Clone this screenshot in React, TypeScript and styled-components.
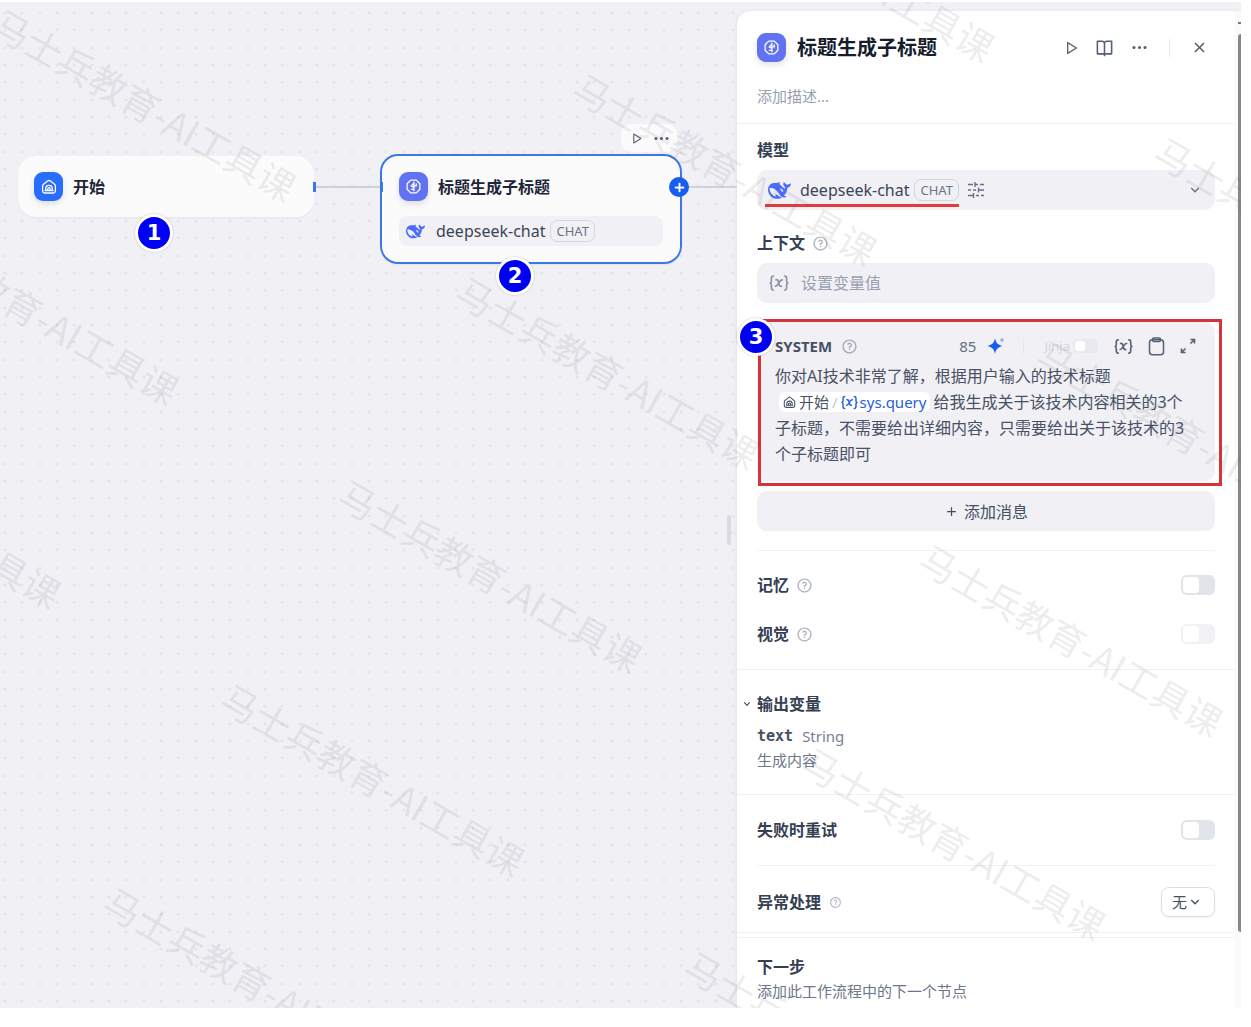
import React from "react";
import styled, { createGlobalStyle } from "styled-components";
import {
  RiAddLine,
  RiArrowDownSLine,
  RiBookOpenLine,
  RiCloseLine,
  RiMoreFill,
  RiPlayLargeLine,
  RiQuestionLine,
} from "react-icons/ri";

const GlobalStyle = createGlobalStyle`
  * { box-sizing: border-box; }
  body {
    margin: 0;
    background: #ffffff;
    color: #354052;
    font-family: "Noto Sans", "Noto Sans CJK SC", sans-serif;
    font-size: 16px;
  }
  button, input, select { font: inherit; color: inherit; }
  button { border: 0; padding: 0; background: none; cursor: pointer; }
  svg { display: block; flex: none; }
`;

/* ---------- page ---------- */

const Page = styled.div`
  display: flex;
  min-height: 100vh;
  padding: 2px 10px 19px 0;
`;

const Frame = styled.main`
  position: relative;
  display: flex;
  flex: 1;
  min-width: 0;
  overflow: hidden;
  background: #f0f0f5;
`;

const Canvas = styled.section`
  position: relative;
  flex: 1;
  min-width: 0;
`;

const CanvasDrawing = styled.svg`
  position: absolute;
  inset: 0;
  width: 100%;
  height: 100%;
`;

const ResizeHandle = styled.div`
  position: absolute;
  top: 513px;
  right: 6px;
  width: 4px;
  height: 30px;
  border-radius: 2px;
  background: #d8dbe2;
`;

/* ---------- nodes ---------- */

const Node = styled.article<{ $x: number; $y: number; $w: number; $selected?: boolean }>`
  position: absolute;
  left: ${(p) => p.$x}px;
  top: ${(p) => p.$y}px;
  width: ${(p) => p.$w}px;
  padding: ${(p) => (p.$selected ? "16px 17px 16px" : "14px")};
  border: 2px solid ${(p) => (p.$selected ? "#3b78e7" : "#fbfbfb")};
  border-radius: 18px;
  background: #fbfbfb;
  box-shadow: 0 1px 2px rgba(16, 24, 40, 0.05);
`;

const NodeHead = styled.div`
  display: flex;
  align-items: center;
  gap: 10px;
`;

const NodeTitle = styled.h3`
  margin: 0;
  font-size: 16px;
  line-height: 24px;
  font-weight: 700;
  color: #1f2638;
`;

const NodeModel = styled.div`
  display: flex;
  align-items: center;
  gap: 11px;
  height: 30px;
  margin-top: 15px;
  padding: 0 7px;
  border-radius: 8px;
  background: #f1f1f5;
`;

const IconTile = styled.span<{ $color: string }>`
  display: grid;
  place-items: center;
  flex: none;
  width: 29px;
  height: 29px;
  border-radius: 9px;
  background: ${(p) => p.$color};
  color: #ffffff;
  box-shadow: 0 3px 6px rgba(16, 24, 40, 0.12);
`;

const NodeToolbar = styled.div`
  position: absolute;
  right: 3px;
  bottom: 100%;
  display: flex;
  align-items: center;
  gap: 9px;
  height: 28px;
  margin-bottom: 4px;
  padding: 0 6px 0 9px;
  border-radius: 10px;
  background: #fbfbfb;
  color: #566074;
`;

const AddHandle = styled.button`
  position: absolute;
  top: 21px;
  right: -9px;
  display: grid;
  place-items: center;
  width: 20px;
  height: 20px;
  border-radius: 50%;
  background: #155eef;
  color: #ffffff;
`;

const Port = styled.span<{ $x: number }>`
  position: absolute;
  left: ${(p) => p.$x}px;
  top: 180px;
  width: 3px;
  height: 10px;
  background: #3b78e7;
`;

const Marker = styled.span<{ $x: number; $y: number }>`
  position: absolute;
  z-index: 2;
  left: ${(p) => p.$x}px;
  top: ${(p) => p.$y}px;
  display: grid;
  place-items: center;
  width: 38px;
  height: 38px;
  border: 3px solid #ffffff;
  border-radius: 50%;
  background: #0000f5;
  box-shadow: 0 0 2px rgba(0, 0, 0, 0.25);
  color: #ffffff;
  font: 700 21px/30px "DejaVu Sans", sans-serif;
`;

const ModelName = styled.span`
  display: flex;
  align-items: center;
  gap: 5px;
  font-size: 16px;
  line-height: 24px;
  color: #3c4558;
`;

const Tag = styled.span`
  height: 22px;
  padding: 0 5px;
  border: 1px solid #d3d6de;
  border-radius: 7px;
  font-size: 13px;
  line-height: 20px;
  color: #6b7486;
`;

/* ---------- side panel ---------- */

const Panel = styled.aside`
  display: flex;
  flex: none;
  width: 504px;
  margin-top: 9px;
  border-radius: 14px 0 0 0;
  background: #ffffff;
  box-shadow: -1px 0 3px rgba(16, 24, 40, 0.06);
`;

const PanelBody = styled.div`
  flex: 1;
  min-width: 0;
`;

const ScrollTrack = styled.div`
  display: flex;
  flex-direction: column;
  align-items: flex-end;
  width: 6px;
  padding: 11px 0 76px;
  background: #fafafa;
`;

const ScrollArrow = styled.span`
  width: 3px;
  height: 2px;
  margin-bottom: 10px;
  background: #777777;
`;

const ScrollThumb = styled.span`
  flex: 1;
  width: 3px;
  border-radius: 3px 0 0 3px;
  background: #878787;
`;

const PanelHeader = styled.header`
  padding: 22px 20px 15px;
  border-bottom: 1px solid #eff0f3;
`;

const Row = styled.div`
  display: flex;
  align-items: center;
  gap: 8px;
`;

const PanelTitle = styled.h2`
  flex: 1;
  margin: 0 0 0 3px;
  font-size: 20px;
  line-height: 28px;
  font-weight: 700;
  color: #161d2d;
`;

const HeaderActions = styled.div`
  display: flex;
  align-items: center;
  gap: 16px;
  padding-right: 6px;
  color: #566074;
`;

const HeaderRule = styled.span`
  width: 1px;
  height: 18px;
  margin: 0 4px;
  background: #e6e8ed;
`;

const Description = styled.input`
  display: block;
  width: 100%;
  height: 24px;
  margin-top: 22px;
  padding: 0;
  border: 0;
  outline: 0;
  background: none;
  font-size: 15px;
  &::placeholder { color: #98a0b0; opacity: 1; }
`;

const Section = styled.section<{ $top: number; $bottom: number }>`
  padding: ${(p) => p.$top}px 20px ${(p) => p.$bottom}px;
`;

const Rule = styled.hr<{ $inset?: boolean }>`
  height: 1px;
  margin: 0 ${(p) => (p.$inset ? 20 : 0)}px;
  border: 0;
  background: #f0f1f4;
`;

const NextSection = styled(Section)`
  margin-top: 4px;
  border-top: 1px solid #f0f1f4;
`;

const LabelRow = styled.div<{ $gap?: number }>`
  display: flex;
  align-items: center;
  gap: 7px;
  height: 24px;
  margin-bottom: ${(p) => p.$gap || 0}px;
  color: #b0b6c2;
`;

const Label = styled.label`
  font-size: 16px;
  line-height: 24px;
  font-weight: 700;
  color: #354052;
`;

const Spacer = styled.span`
  flex: 1;
`;

const Field = styled.div`
  display: flex;
  align-items: center;
  height: 40px;
  border-radius: 10px;
  background: #f0f0f5;
  color: #667085;
`;

const ModelField = styled(Field)`
  margin-bottom: 21px;
  padding: 0 12px 0 8px;
  gap: 8px;
`;

const ModelPicker = styled.button`
  position: relative;
  display: flex;
  align-items: center;
  gap: 9px;
  height: 40px;
  padding-left: 3px;
  &::after {
    content: "";
    position: absolute;
    left: 0;
    right: 0;
    bottom: 3px;
    height: 3px;
    background: #e23b42;
  }
`;

const VariableField = styled(Field)`
  margin-bottom: 19px;
  padding: 0 12px;
  gap: 12px;
  color: #8b94a6;
`;

const VariableInput = styled.input`
  flex: 1;
  min-width: 0;
  padding: 0;
  border: 0;
  outline: 0;
  background: none;
  &::placeholder { color: #98a0b0; opacity: 1; }
`;

const Prompt = styled.div`
  position: relative;
  margin-bottom: 10px;
  padding: 12px 19px 14px 18px;
  border-radius: 10px;
  background: #f0f0f5;
`;

const Highlight = styled.div`
  position: absolute;
  inset: -3px -7px -5px 1px;
  border: 3px solid #d2363b;
  pointer-events: none;
`;

const PromptHead = styled.div`
  display: flex;
  align-items: center;
  height: 24px;
  margin-bottom: 5px;
  color: #566074;
`;

const Role = styled.span`
  margin-right: 9px;
  font-size: 15px;
  font-weight: 700;
  color: #465063;
`;

const Count = styled.span`
  margin-right: 11px;
  font-size: 15px;
  color: #667085;
`;

const PromptRule = styled.span`
  width: 1px;
  height: 16px;
  margin: 0 20px 0 18px;
  background: #e6e7ed;
`;

const Jinja = styled.label`
  margin-right: 3px;
  font-size: 13px;
  color: #d5d7de;
`;

const Tools = styled.div`
  display: flex;
  align-items: center;
  gap: 15px;
  margin-left: 16px;
`;

const PromptText = styled.p`
  margin: 0;
  font-size: 16px;
  line-height: 26px;
  color: #495163;
`;

const Chip = styled.span`
  display: inline-flex;
  align-items: center;
  height: 20px;
  margin: 3px 3px 3px 4px;
  padding: 0 4px;
  gap: 3px;
  border-radius: 6px;
  background: #ffffff;
  vertical-align: top;
  font-size: 15px;
  line-height: 20px;
`;

const ChipSlash = styled.span`
  color: #c5cad4;
`;

const ChipVariable = styled.span`
  display: inline-flex;
  align-items: center;
  gap: 2px;
  color: #2460dc;
`;

const AddMessage = styled.button`
  display: flex;
  align-items: center;
  justify-content: center;
  gap: 5px;
  width: 100%;
  height: 40px;
  border-radius: 10px;
  background: #f0f0f5;
  color: #465063;
`;

const Switch = styled.input<{ $small?: boolean }>`
  appearance: none;
  flex: none;
  display: flex;
  width: ${(p) => (p.$small ? 25 : 34)}px;
  height: ${(p) => (p.$small ? 14 : 20)}px;
  margin: 0;
  padding: 2px;
  border-radius: ${(p) => (p.$small ? 4 : 6)}px;
  background: #e2e4eb;
  &:disabled { background: ${(p) => (p.$small ? "#e9eaef" : "#f1f1f6")}; }
  &::before {
    content: "";
    width: ${(p) => (p.$small ? 10 : 16)}px;
    border-radius: ${(p) => (p.$small ? 3 : 4)}px;
    background: #ffffff;
  }
`;

const OutputLabel = styled.button`
  display: flex;
  align-items: center;
  gap: 4px;
  height: 24px;
  margin: 0 0 8px -16px;
  font-weight: 700;
  line-height: 24px;
  color: #354052;
`;

const OutputName = styled.code`
  margin-right: 1px;
  font: 700 15px/24px "DejaVu Sans Mono", monospace;
  color: #465063;
`;

const OutputType = styled.span`
  font-size: 15px;
  line-height: 24px;
  color: #778093;
`;

const Hint = styled.p`
  margin: 0;
  font-size: 15px;
  line-height: 24px;
  color: #6e778a;
`;

const SelectBox = styled.span`
  display: grid;
  grid-template-columns: 1fr;
  align-items: center;
  width: 54px;
  height: 30px;
  border: 1px solid #dcdfe5;
  border-radius: 8px;
  box-shadow: 0 1px 2px rgba(16, 24, 40, 0.06);
  color: #465063;
  > * { grid-area: 1 / 1; }
  > svg { justify-self: end; margin-right: 11px; pointer-events: none; }
`;

const Select = styled.select`
  appearance: none;
  width: 100%;
  height: 100%;
  padding: 0 0 0 10px;
  border: 0;
  outline: 0;
  background: none;
  font-size: 15px;
`;

/* ---------- watermark ---------- */

const WatermarkLayer = styled.div`
  position: absolute;
  z-index: 3;
  left: 241px;
  top: -406px;
  display: grid;
  grid-template-columns: repeat(3, 535px);
  grid-auto-rows: 235px;
  transform: rotate(30deg);
  transform-origin: 0 0;
  pointer-events: none;
  font: 400 37px/37px "Noto Sans CJK SC", sans-serif;
  color: rgba(70, 72, 80, 0.11);
  white-space: nowrap;
`;

const Watermark = styled.span<{ $col: number; $row: number }>`
  grid-column: ${(p) => p.$col};
  grid-row: ${(p) => p.$row};
`;

const WATERMARKS = [
  { col: 1, rows: [3, 4, 5] },
  { col: 2, rows: [1, 2, 3, 4, 5, 6] },
  { col: 3, rows: [1, 2, 3, 4, 5] },
];

/* ---------- icons ---------- */

const DeepSeekIcon = ({ size }: { size: number }) => (
  <svg width={size} height={size} viewBox="0 0 24 24" fill="#4d6bfe" fillRule="evenodd" aria-hidden="true">
    <path d="M23.748 4.482c-.254-.124-.364.113-.512.234-.051.039-.094.09-.137.136-.372.397-.806.657-1.373.626-.829-.046-1.537.214-2.163.848-.133-.782-.575-1.248-1.247-1.548-.352-.156-.708-.311-.955-.65-.172-.241-.219-.51-.305-.774-.055-.16-.11-.323-.293-.35-.2-.031-.278.136-.356.276-.313.572-.434 1.202-.422 1.84.027 1.436.633 2.58 1.838 3.393.137.093.172.187.129.323-.082.28-.18.552-.266.833-.055.179-.137.217-.329.14a5.526 5.526 0 01-1.736-1.18c-.857-.828-1.631-1.742-2.597-2.458a11.365 11.365 0 00-.689-.471c-.985-.957.13-1.743.388-1.836.27-.098.093-.432-.779-.428-.872.004-1.67.295-2.687.684a3.055 3.055 0 01-.465.137 9.597 9.597 0 00-2.883-.102c-1.885.21-3.39 1.102-4.497 2.623C.082 8.606-.231 10.684.152 12.85c.403 2.284 1.569 4.175 3.36 5.653 1.858 1.533 3.997 2.284 6.438 2.14 1.482-.085 3.133-.284 4.994-1.86.47.234.962.327 1.78.397.63.059 1.236-.03 1.705-.128.735-.156.684-.837.419-.961-2.155-1.004-1.682-.595-2.113-.926 1.096-1.296 2.746-2.642 3.392-7.003.05-.347.007-.565 0-.845-.004-.17.035-.237.23-.256a4.173 4.173 0 001.545-.475c1.396-.763 1.96-2.015 2.093-3.517.02-.23-.004-.467-.247-.588zM11.581 18c-2.089-1.642-3.102-2.183-3.52-2.16-.392.024-.321.471-.235.763.09.288.207.486.371.739.114.167.192.416-.113.603-.673.416-1.842-.14-1.897-.167-1.361-.802-2.5-1.86-3.301-3.307-.774-1.393-1.224-2.887-1.298-4.482-.02-.386.093-.522.477-.592a4.696 4.696 0 011.529-.039c2.132.312 3.946 1.265 5.468 2.774.868.86 1.525 1.887 2.202 2.891.72 1.066 1.494 2.082 2.48 2.914.348.292.625.514.891.677-.802.09-2.14.11-3.054-.614zm1-6.44a.306.306 0 01.415-.287.302.302 0 01.2.288.306.306 0 01-.31.307.303.303 0 01-.304-.308zm3.11 1.596c-.2.081-.399.151-.59.16a1.245 1.245 0 01-.798-.254c-.274-.23-.47-.358-.552-.758a1.73 1.73 0 01.016-.588c.07-.327-.008-.537-.239-.727-.187-.156-.426-.199-.688-.199a.559.559 0 01-.254-.078c-.11-.054-.2-.19-.114-.358.028-.054.16-.186.192-.21.356-.202.767-.136 1.146.016.352.144.618.408 1.001.782.391.451.462.576.685.914.176.265.336.537.445.848.067.195-.019.354-.25.452z" />
  </svg>
);

const HomeIcon = ({ size }: { size: number }) => (
  <svg width={size} height={size} viewBox="0 0 16 16" fill="none" stroke="currentColor" strokeWidth="1.3" strokeLinecap="round" strokeLinejoin="round" aria-hidden="true">
    <path d="M1.6 7.2c0-.8.3-1.4.9-1.9l4.1-3.4a2.2 2.2 0 0 1 2.8 0l4.1 3.4c.6.5.9 1.1.9 1.9v4.6a2.2 2.2 0 0 1-2.2 2.2H3.8a2.2 2.2 0 0 1-2.2-2.2z" />
    <path d="M4.7 11.4V9.6a3.3 3.3 0 0 1 6.6 0v1.8M6.8 11.4V9.8a1.2 1.2 0 0 1 2.4 0v1.6M4 11.5h8" />
  </svg>
);

const LlmIcon = () => (
  <svg width="17" height="17" viewBox="0 0 16 16" fill="none" stroke="currentColor" strokeWidth="1.2" strokeLinecap="round" strokeLinejoin="round" aria-hidden="true">
    <path d="M5.4 2h5.2L14 5.400v5.200L10.600 14H5.400L2 10.600V5.400z" />
    <path d="M8.400 4v8M8.400 5 5.800 7.400l2.600 1.400M8.400 7.400h2.200M10.600 5.600v1.800M6 10.600h2.400" />
  </svg>
);

const VariableIcon = ({ size }: { size: number }) => (
  <svg width={size} height={size} viewBox="0 0 20 20" fill="none" stroke="currentColor" strokeWidth="1.7" strokeLinecap="round" strokeLinejoin="round" aria-hidden="true">
    <path d="M4.400 3C2.800 3 2.400 4 2.400 5.400v2.400c0 1.200-.3 1.900-1.200 2.200.9.3 1.200 1 1.200 2.200v2.400c0 1.400.4 2.400 2 2.400M15.600 3c1.600 0 2 1 2 2.400v2.400c0 1.200.3 1.900 1.200 2.200-.9.3-1.200 1-1.200 2.200v2.400c0 1.400-.4 2.400-2 2.400" />
    <path d="M7 6.800c1.300-.3 1.900.2 2.200 1.400l1 3.600c.3 1.200.9 1.700 2.200 1.400M13.300 6.800c-1.700-.2-2.500 1.300-3.500 3.100s-1.700 3.500-3.300 3.300" />
  </svg>
);

const SlidersIcon = () => (
  <svg width="18" height="18" viewBox="0 0 18 18" fill="none" stroke="currentColor" strokeWidth="1.400" aria-hidden="true">
    <path d="M1 3.500h5M8 1v5M8 3.500h3M13 3.500h4M1 9h3M6 9h3M11.500 6.500v5M11.500 9H17M1 14.500h3M6.500 12v5M4 14.500h2.500M9 14.500h3M14 14.500h3" />
  </svg>
);

const SparkleIcon = () => (
  <svg width="18" height="18" viewBox="0 0 18 18" fill="#155eef" aria-hidden="true">
    <path d="M8 1c.9 4.900 2.200 6.500 7.600 8-5.400 1.500-6.700 3.100-7.600 8C7.100 12.100 5.800 10.500.4 9 5.800 7.500 7.100 5.900 8 1z" />
    <circle cx="15" cy="3" r="1.700" opacity=".45" />
  </svg>
);

const ClipboardIcon = () => (
  <svg width="17" height="19" viewBox="0 0 17 19" fill="none" stroke="currentColor" strokeWidth="1.500" strokeLinejoin="round" aria-hidden="true">
    <rect x="1.500" y="2.800" width="14" height="15" rx="3" />
    <rect x="4.500" y="1" width="8" height="3.600" rx="1.500" />
  </svg>
);

const ExpandIcon = () => (
  <svg width="16" height="16" viewBox="0 0 16 16" fill="none" stroke="currentColor" strokeWidth="1.600" aria-hidden="true">
    <path d="M10.500 1.500h4V5.500M14.500 1.500 10.500 5.500M1.500 10.500v4h4M1.500 14.500l4-4" />
  </svg>
);

const DOTS = [5, 22, 40];

/* ---------- view ---------- */

export default function App() {
  return (
    <Page>
      <GlobalStyle />
      <Frame>
        <Canvas>
          <CanvasDrawing aria-hidden="true">
            <defs>
              <pattern id="dots" width="52" height="52" patternUnits="userSpaceOnUse">
                {DOTS.map((x) =>
                  DOTS.map((y) => <circle key={`${x}-${y}`} cx={x} cy={y + 6} r="1.500" fill="#e1e4ea" />)
                )}
              </pattern>
            </defs>
            <rect width="100%" height="100%" fill="url(#dots)" />
            <path d="M314 185H382M680 185H760" stroke="#cdd2db" strokeWidth="2" />
          </CanvasDrawing>

          <Node $x={18} $y={154} $w={296}>
            <NodeHead>
              <IconTile $color="#296dff"><HomeIcon size={16} /></IconTile>
              <NodeTitle>开始</NodeTitle>
            </NodeHead>
          </Node>
          <Port $x={313} />

          <Node $x={380} $y={152} $w={302} $selected>
            <NodeToolbar>
              <button aria-label="运行"><RiPlayLargeLine size={13} /></button>
              <button aria-label="更多"><RiMoreFill size={19} /></button>
            </NodeToolbar>
            <NodeHead>
              <IconTile $color="#6172f3"><LlmIcon /></IconTile>
              <NodeTitle>标题生成子标题</NodeTitle>
            </NodeHead>
            <NodeModel>
              <DeepSeekIcon size={19} />
              <ModelName>deepseek-chat<Tag>CHAT</Tag></ModelName>
            </NodeModel>
            <AddHandle aria-label="添加节点"><RiAddLine size={15} strokeWidth={1} /></AddHandle>
          </Node>
          <Port $x={380} />

          <Marker $x={135} $y={212}>1</Marker>
          <Marker $x={496} $y={255}>2</Marker>
          <ResizeHandle />
        </Canvas>

        <Panel>
          <PanelBody>
            <PanelHeader>
              <Row>
                <IconTile $color="#6172f3"><LlmIcon /></IconTile>
                <PanelTitle>标题生成子标题</PanelTitle>
                <HeaderActions>
                  <button aria-label="运行"><RiPlayLargeLine size={16} /></button>
                  <button aria-label="帮助文档"><RiBookOpenLine size={19} /></button>
                  <button aria-label="更多"><RiMoreFill size={19} /></button>
                  <HeaderRule />
                  <button aria-label="关闭"><RiCloseLine size={19} /></button>
                </HeaderActions>
              </Row>
              <Description aria-label="描述" placeholder="添加描述..." />
            </PanelHeader>

            <Section $top={14} $bottom={19}>
              <LabelRow $gap={8}><Label as="span">模型</Label></LabelRow>
              <ModelField>
                <ModelPicker>
                  <DeepSeekIcon size={23} />
                  <ModelName>deepseek-chat<Tag>CHAT</Tag></ModelName>
                </ModelPicker>
                <button aria-label="模型参数"><SlidersIcon /></button>
                <Spacer />
                <button aria-label="选择模型"><RiArrowDownSLine size={16} /></button>
              </ModelField>

              <LabelRow $gap={8}>
                <Label htmlFor="context">上下文</Label>
                <RiQuestionLine size={17} />
              </LabelRow>
              <VariableField>
                <VariableIcon size={20} />
                <VariableInput id="context" placeholder="设置变量值" />
              </VariableField>

              <Prompt>
                <PromptHead>
                  <Role>SYSTEM</Role>
                  <RiQuestionLine size={17} color="#a3aab8" />
                  <Spacer />
                  <Count>85</Count>
                  <SparkleIcon />
                  <PromptRule />
                  <Jinja htmlFor="jinja">Jinja</Jinja>
                  <Switch id="jinja" type="checkbox" $small disabled />
                  <Tools>
                    <button aria-label="插入变量"><VariableIcon size={19} /></button>
                    <button aria-label="复制"><ClipboardIcon /></button>
                    <button aria-label="展开"><ExpandIcon /></button>
                  </Tools>
                </PromptHead>
                <PromptText>
                  你对AI技术非常了解，根据用户输入的技术标题
                  <br />
                  <Chip>
                    <HomeIcon size={13} />
                    开始
                    <ChipSlash>/</ChipSlash>
                    <ChipVariable><VariableIcon size={17} />sys.query</ChipVariable>
                  </Chip>
                  给我生成关于该技术内容相关的3个子标题，不需要给出详细内容，只需要给出关于该技术的3个子标题即可
                </PromptText>
                <Highlight />
                <Marker $x={-20} $y={-4}>3</Marker>
              </Prompt>

              <AddMessage><RiAddLine size={15} />添加消息</AddMessage>
            </Section>
            <Rule $inset />

            <Section $top={22} $bottom={23}>
              <LabelRow $gap={25}>
                <Label htmlFor="memory">记忆</Label>
                <RiQuestionLine size={17} />
                <Spacer />
                <Switch id="memory" type="checkbox" />
              </LabelRow>
              <LabelRow>
                <Label htmlFor="vision">视觉</Label>
                <RiQuestionLine size={17} />
                <Spacer />
                <Switch id="vision" type="checkbox" disabled />
              </LabelRow>
            </Section>
            <Rule />

            <Section $top={22} $bottom={22}>
              <OutputLabel><RiArrowDownSLine size={12} />输出变量</OutputLabel>
              <Row>
                <OutputName>text</OutputName>
                <OutputType>String</OutputType>
              </Row>
              <Hint>生成内容</Hint>
            </Section>
            <Rule />

            <Section $top={23} $bottom={23}>
              <LabelRow>
                <Label htmlFor="retry">失败时重试</Label>
                <Spacer />
                <Switch id="retry" type="checkbox" />
              </LabelRow>
            </Section>
            <Rule $inset />

            <Section $top={21} $bottom={15}>
              <Row>
                <Label htmlFor="errors">异常处理</Label>
                <RiQuestionLine size={13} color="#b4bac6" />
                <Spacer />
                <SelectBox>
                  <Select id="errors" defaultValue="none">
                    <option value="none">无</option>
                  </Select>
                  <RiArrowDownSLine size={16} />
                </SelectBox>
              </Row>
            </Section>
            <Rule />

            <NextSection $top={17} $bottom={4}>
              <LabelRow><Label as="span">下一步</Label></LabelRow>
              <Hint>添加此工作流程中的下一个节点</Hint>
            </NextSection>
          </PanelBody>
          <ScrollTrack>
            <ScrollArrow />
            <ScrollThumb />
          </ScrollTrack>
        </Panel>

        <WatermarkLayer aria-hidden="true">
          {WATERMARKS.map(({ col, rows }) =>
            rows.map((row) => (
              <Watermark key={`${col}-${row}`} $col={col} $row={row}>马士兵教育-AI工具课</Watermark>
            ))
          )}
        </WatermarkLayer>
      </Frame>
    </Page>
  );
}
